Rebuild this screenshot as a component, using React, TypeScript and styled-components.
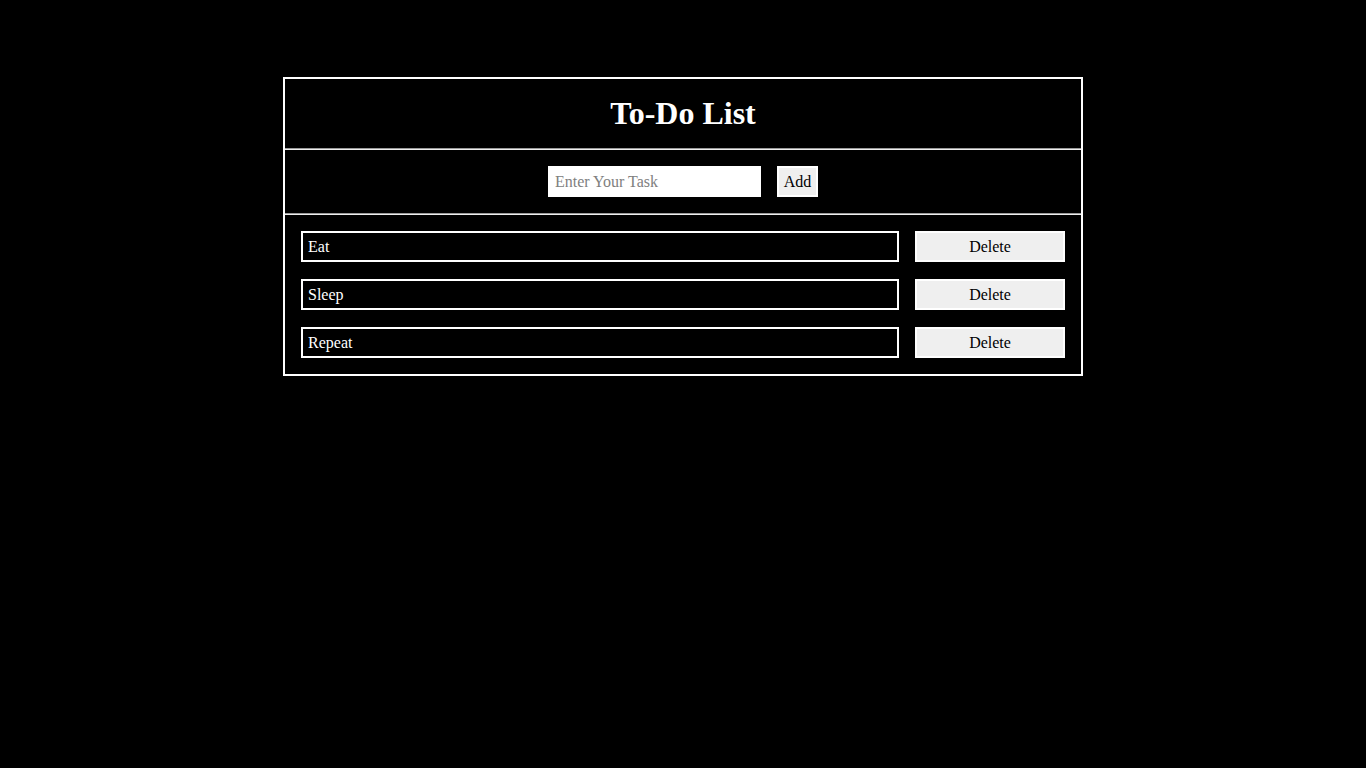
import React, { useState } from "react";
import styled, { createGlobalStyle } from "styled-components";

const Global = createGlobalStyle`
  html, body { margin: 0; padding: 0; background: #000; }
  body { font-family: "Liberation Serif", "Times New Roman", serif; color: #fff; }
`;

const Page = styled.div`
  min-height: 768px;
  background: #000;
  padding-top: 77px;
  display: flex;
  justify-content: center;
  align-items: flex-start;
  box-sizing: border-box;
`;

const Card = styled.div`
  width: 800px;
  box-sizing: border-box;
  border: 2px solid #fff;
  display: flex;
  flex-direction: column;
`;

const Header = styled.div`
  height: 69px;
  display: flex;
  align-items: center;
  justify-content: center;
`;

const Title = styled.h1`
  margin: 0;
  font-size: 32px;
  font-weight: bold;
  color: #fff;
  line-height: 1;
  padding-bottom: 2px;
`;

const Divider = styled.div`
  height: 0;
  border-top: 1px solid #9a9a9a;
  border-bottom: 1px solid #eeeeee;
`;

const InputRow = styled.div`
  display: flex;
  justify-content: center;
  align-items: center;
  gap: 16px;
  padding: 16px 0 16px 0;
  height: 63px;
  box-sizing: border-box;
`;

const TaskInput = styled.input`
  width: 213px;
  height: 31px;
  box-sizing: border-box;
  border: none;
  outline: none;
  background: #fff;
  font-family: "Liberation Serif", "Times New Roman", serif;
  font-size: 16px;
  padding: 0 7px;
  color: #000;
  &::placeholder { color: #808080; }
`;

const Button = styled.button<{ $wide?: boolean }>`
  height: 31px;
  width: ${(p) => (p.$wide ? "150px" : "41px")};
  box-sizing: border-box;
  border: 2px solid #fff;
  background: #efefef;
  color: #000;
  font-family: "Liberation Serif", "Times New Roman", serif;
  font-size: 16px;
  padding: 0;
  cursor: pointer;
`;

const List = styled.div`
  display: flex;
  flex-direction: column;
  gap: 17px;
  padding: 16px;
`;

const Row = styled.div`
  display: flex;
  align-items: center;
  gap: 16px;
`;

const Item = styled.div`
  flex: 1;
  height: 31px;
  box-sizing: border-box;
  border: 2px solid #fff;
  display: flex;
  align-items: center;
  padding: 0 5px;
  font-size: 16px;
  color: #fff;
`;

export default function App() {
  const [tasks, setTasks] = useState<string[]>(["Eat", "Sleep", "Repeat"]);
  const [value, setValue] = useState("");

  const add = () => {
    if (value.trim()) {
      setTasks([...tasks, value.trim()]);
      setValue("");
    }
  };

  return (
    <>
      <Global />
      <Page>
        <Card>
          <Header>
            <Title>To-Do List</Title>
          </Header>
          <Divider />
          <InputRow>
            <TaskInput
              placeholder="Enter Your Task"
              value={value}
              onChange={(e) => setValue(e.target.value)}
            />
            <Button onClick={add}>Add</Button>
          </InputRow>
          <Divider />
          <List>
            {tasks.map((t, i) => (
              <Row key={i}>
                <Item>{t}</Item>
                <Button $wide onClick={() => setTasks(tasks.filter((_, j) => j !== i))}>
                  Delete
                </Button>
              </Row>
            ))}
          </List>
        </Card>
      </Page>
    </>
  );
}
